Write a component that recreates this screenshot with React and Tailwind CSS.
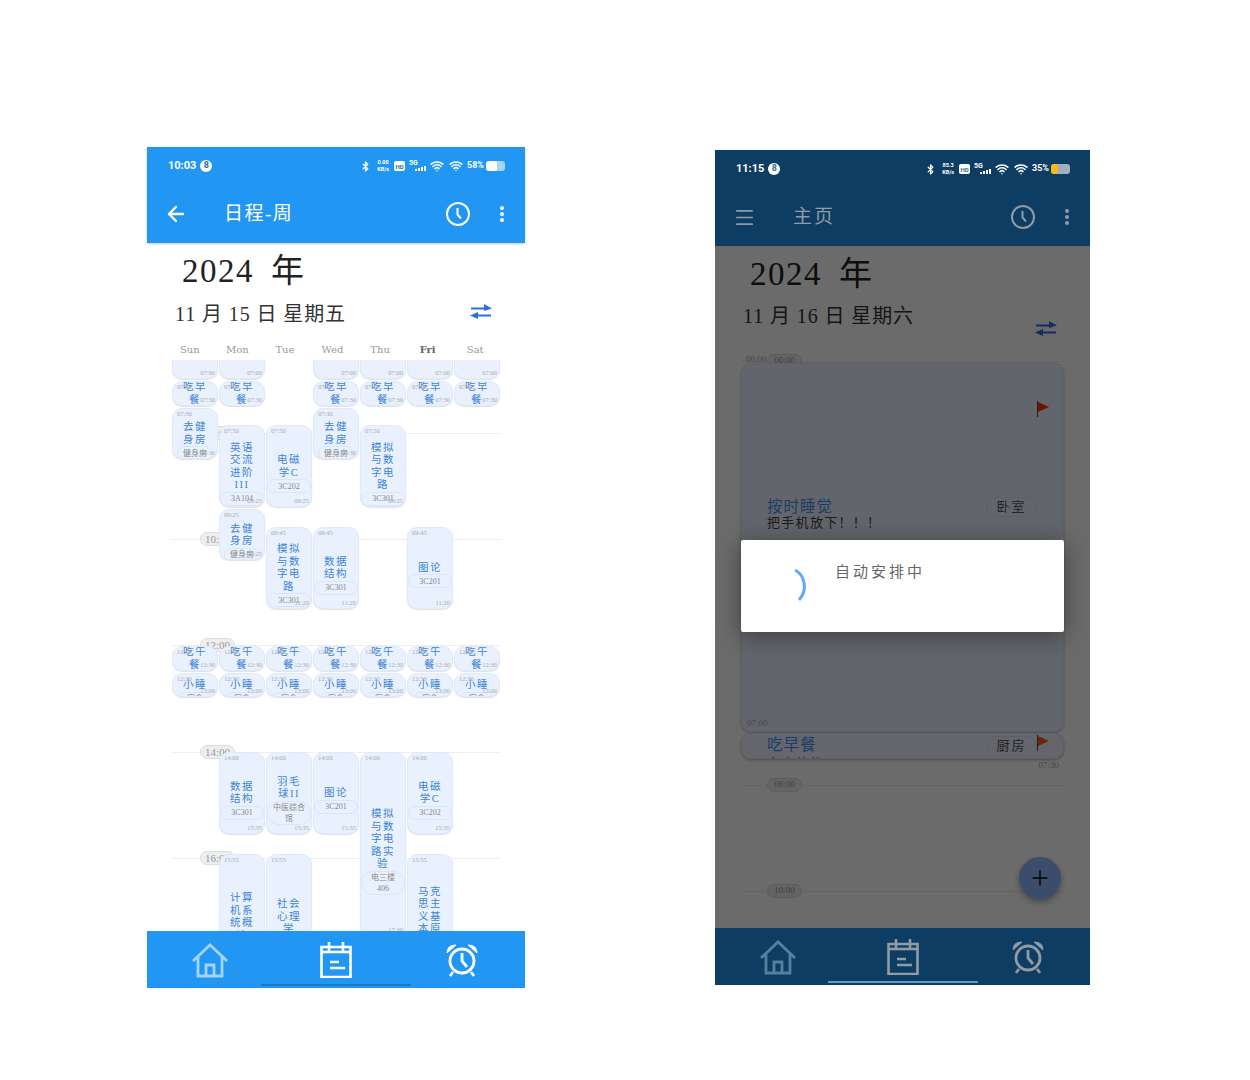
import { ArrowLeft, Bluetooth, Menu, Plus, Wifi } from "lucide-react";

const HOUR = 53;
const days = ["Sun", "Mon", "Tue", "Wed", "Thu", "Fri", "Sat"];

const toY = (t) => {
  const [h, m] = t.split(":").map(Number);
  return ((h * 60 + m) * HOUR) / 60;
};

const daily = [
  { days: [0, 1, 3, 4, 5, 6], start: "00:00", end: "07:00", title: "按时\n睡觉", room: "卧室" },
  { days: [0, 1, 3, 4, 5, 6], start: "07:00", end: "07:30", title: "吃早\n餐", room: "厨房" },
  { days: [0, 3], start: "07:30", end: "08:30", title: "去健\n身房", room: "健身房" },
  { days: [1], start: "07:50", end: "09:25", title: "英语\n交流\n进阶\nIII", room: "3A104" },
  { days: [2], start: "07:50", end: "09:25", title: "电磁\n学C", room: "3C202" },
  { days: [4], start: "07:50", end: "09:25", title: "模拟\n与数\n字电\n路", room: "3C301" },
  { days: [1], start: "09:25", end: "10:25", title: "去健\n身房", room: "健身房" },
  { days: [2], start: "09:45", end: "11:20", title: "模拟\n与数\n字电\n路", room: "3C301" },
  { days: [3], start: "09:45", end: "11:20", title: "数据\n结构", room: "3C301" },
  { days: [5], start: "09:45", end: "11:20", title: "图论", room: "3C201" },
  { days: [0, 1, 2, 3, 4, 5, 6], start: "12:00", end: "12:30", title: "吃午\n餐", room: "食堂" },
  { days: [0, 1, 2, 3, 4, 5, 6], start: "12:30", end: "13:00", title: "小睡", room: "宿舍" },
  { days: [1], start: "14:00", end: "15:35", title: "数据\n结构", room: "3C301" },
  { days: [2], start: "14:00", end: "15:35", title: "羽毛\n球II", room: "中医综合馆" },
  { days: [3], start: "14:00", end: "15:35", title: "图论", room: "3C201" },
  { days: [4], start: "14:00", end: "17:30", title: "模拟\n与数\n字电\n路实\n验", room: "电三楼\n406" },
  { days: [5], start: "14:00", end: "15:35", title: "电磁\n学C", room: "3C202" },
  { days: [1], start: "15:55", end: "18:20", title: "计算\n机系\n统概\n论", room: "3C201" },
  { days: [2], start: "15:55", end: "18:20", title: "社会\n心理\n学", room: "3C201" },
  { days: [5], start: "15:55", end: "18:20", title: "马克\n思主\n义基\n本原\n理", room: "3C201" },
];

function HomeIcon({ className }) {
  return (
    <svg className={className} width="38" height="36" viewBox="0 0 38 36" fill="none" stroke="currentColor" strokeWidth="2.8">
      <path d="M2 19 19 3l17 16" />
      <path d="M7 15v19h24V15" />
      <path d="M15 34V23h8v11" />
    </svg>
  );
}

function CalendarIcon({ className }) {
  return (
    <svg className={className} width="32" height="36" viewBox="0 0 32 36" fill="none" stroke="currentColor" strokeWidth="2.6">
      <path d="M1.5 5h29v30h-29z" />
      <path d="M1.5 10h29" />
      <path d="M9 0v9M23 0v9" />
      <path d="M10 20h9M10 26h15" />
    </svg>
  );
}

function AlarmIcon({ className }) {
  return (
    <svg className={className} width="32" height="34" viewBox="0 0 32 34" fill="none" stroke="currentColor" strokeWidth="2.8">
      <circle cx="16" cy="18" r="12" />
      <path d="M16 10v8l5 6" />
      <path d="M7 29l-3 4M25 29l3 4" />
      <path d="M1 10Q1 2 10 2z" fill="currentColor" strokeWidth="1" />
      <path d="M31 10Q31 2 22 2z" fill="currentColor" strokeWidth="1" />
    </svg>
  );
}

function ClockIcon({ className }) {
  return (
    <svg className={className} width="24" height="24" viewBox="0 0 24 24" fill="none" stroke="currentColor" strokeWidth="2">
      <circle cx="12" cy="12" r="11" />
      <path d="M11.5 6v6.5l3.5 4" />
    </svg>
  );
}

function SwapIcon({ className }) {
  return (
    <svg className={className} width="22" height="16" viewBox="0 0 22 16" fill="currentColor">
      <path d="M1 3.5h15v2H1z" />
      <path d="M14 0l8 4.5L14 7z" />
      <path d="M6 10.5h15v2H6z" />
      <path d="M8 8l-8 3.5L8 15z" />
    </svg>
  );
}

function Flag({ className }) {
  return (
    <svg className={className} width="12" height="16" viewBox="0 0 12 16">
      <path d="M.5 0v16" stroke="#4b4f55" strokeWidth="1" />
      <path d="M1 1l11 5-11 5z" fill="currentColor" />
    </svg>
  );
}

function StatusBar({ time, speed, battery, level, fill }) {
  return (
    <div className="flex h-[38px] items-center pl-[21px] pr-[20px] text-white">
      <span className="font-['Roboto',sans-serif] text-[11px] font-bold">{time}</span>
      <span className="ml-[4px] flex h-[12px] w-[12px] items-center justify-center rounded-full bg-white font-['Roboto',sans-serif] text-[9px] font-bold text-[#2b6f9f]">
        8
      </span>
      <div className="ml-auto flex items-center">
        <Bluetooth size={11} strokeWidth={2.6} />
        <div className="ml-[6px] flex flex-col items-center font-['Roboto',sans-serif] text-[5.5px] font-bold leading-[7px]">
          <span>{speed}</span>
          <span>KB/s</span>
        </div>
        <span className="ml-[5px] flex h-[10px] w-[11px] items-center justify-center rounded-[2px] bg-white font-['Roboto',sans-serif] text-[6px] font-bold text-[#2b6f9f]">
          HD
        </span>
        <div className="relative ml-[4px] h-[12px] w-[17px]">
          <span className="absolute left-0 top-[-2px] font-['Roboto',sans-serif] text-[7px] font-bold">5G</span>
          <div className="absolute bottom-[1px] right-0 flex items-end gap-[1px]">
            <i className="h-[2px] w-[2px] bg-white" />
            <i className="h-[3px] w-[2px] bg-white" />
            <i className="h-[4px] w-[2px] bg-white" />
            <i className="h-[5px] w-[2px] bg-white" />
          </div>
        </div>
        <Wifi className="ml-[4px]" size={14} strokeWidth={2.6} />
        <Wifi className="ml-[5px]" size={14} strokeWidth={2.6} />
        <span className="ml-[4px] font-['Roboto',sans-serif] text-[9px] font-bold">{battery}</span>
        <div className="ml-[2px] h-[10px] w-[19px] overflow-hidden rounded-[3px] bg-white/60">
          <div className={`h-full rounded-[2px] ${fill}`} style={{ width: level }} />
        </div>
      </div>
    </div>
  );
}

function BottomNav({ bg, home, icon, bar }) {
  return (
    <div className={`relative grid h-[57px] shrink-0 grid-cols-3 items-center justify-items-center ${bg}`}>
      <HomeIcon className={home} />
      <CalendarIcon className={icon} />
      <AlarmIcon className={icon} />
      <div className={`absolute bottom-[2px] left-1/2 h-[2px] w-[150px] -translate-x-1/2 ${bar}`} />
    </div>
  );
}

function HourLine({ hour, pillLeft, pillWidth, top, left, width, size = "text-[9px]" }) {
  return (
    <div className="absolute h-[1px] bg-[#eeeeee]" style={{ top, left, width }}>
      <span
        className={`absolute top-[-7px] flex h-[14px] items-center justify-center rounded-full border border-[#dddddd] bg-[#eeeeee] text-[#999999] ${size}`}
        style={{ left: pillLeft, width: pillWidth }}
      >
        {hour}
      </span>
    </div>
  );
}

function WeekCard({ item, day, scroll }) {
  const top = toY(item.start) - scroll;
  const height = toY(item.end) - toY(item.start);
  return (
    <div
      className="absolute flex w-[46px] flex-col items-center justify-center overflow-hidden rounded-[10px] border border-[#e0eafb] bg-[#e9f1fe] pt-[15px] shadow-[0_1px_1px_rgba(0,0,0,0.12)]"
      style={{ left: day * 47, top: top + 1, height: height - 2 }}
    >
      <span className="absolute left-[4px] top-[1px] text-[6.5px] leading-[8px] text-[#aaaaaa]">{item.start}</span>
      <span className="absolute bottom-[1px] right-[2px] text-[6.5px] leading-[8px] text-[#aaaaaa]">{item.end}</span>
      <div className="shrink-0 whitespace-pre-line text-center text-[10.5px] leading-[12.5px] tracking-[1.5px] text-[#3d84d6]">
        {item.title}
      </div>
      <div
        className={
          item.room.length > 4
            ? "flex min-h-[14px] w-full shrink-0 items-center justify-center whitespace-pre-line rounded-full border border-[#d8e5fa] px-[3px] text-center text-[8px] leading-[11px] text-[#888888]"
            : "flex min-h-[14px] min-w-[34px] shrink-0 items-center justify-center whitespace-pre-line rounded-full border border-[#d8e5fa] px-[5px] text-center text-[8px] leading-[11px] text-[#888888]"
        }
      >
        {item.room}
      </div>
    </div>
  );
}

function WeekPhone() {
  const scroll = 351;
  return (
    <div className="flex h-[841px] w-[378px] flex-col bg-white">
      <div className="h-[96px] shrink-0 bg-[#2196f3] text-white shadow-[0_1px_3px_rgba(0,0,0,0.2)]">
        <StatusBar time="10:03" speed="0.00" battery="58%" level="60%" fill="bg-white" />
        <div className="flex h-[58px] items-center pl-[17px] pr-[21px]">
          <ArrowLeft size={24} strokeWidth={2.4} />
          <span className="ml-[36px] text-[19px] tracking-[1.5px]">日程-周</span>
          <ClockIcon className="ml-auto" />
          <div className="ml-[30px] flex flex-col gap-[2px]">
            <i className="h-[4px] w-[4px] rounded-full bg-white" />
            <i className="h-[4px] w-[4px] rounded-full bg-white" />
            <i className="h-[4px] w-[4px] rounded-full bg-white" />
          </div>
        </div>
      </div>

      <div className="flex h-[53px] shrink-0 items-center pl-[35px] pt-[5px] text-[33px] tracking-[1.5px] text-[#222222]">
        2024<span className="ml-[17px]">年</span>
      </div>
      <div className="flex h-[36px] shrink-0 items-center pl-[28px] pr-[33px] text-[20px] text-[#333333]">
        <span className="tracking-[0.9px]">11 月 15 日 星期五</span>
        <SwapIcon className="ml-auto mb-[5px] text-[#2f6de0]" />
      </div>
      <div className="grid h-[28px] shrink-0 grid-cols-7 items-end pb-[3px] pl-[19px] pr-[26px] font-['DejaVu_Serif',serif] text-[10px] text-[#999999]">
        {days.map((d) => (
          <span key={d} className={d === "Fri" ? "text-center font-bold text-[#666666]" : "text-center"}>
            {d}
          </span>
        ))}
      </div>

      <div className="relative min-h-0 flex-1 overflow-hidden">
        <HourLine hour="08:00" top={73} left={25} width={328} pillLeft={28} pillWidth={35} size="text-[11px]" />
        <HourLine hour="10:00" top={179} left={25} width={328} pillLeft={28} pillWidth={35} size="text-[11px]" />
        <HourLine hour="12:00" top={285} left={25} width={328} pillLeft={28} pillWidth={35} size="text-[11px]" />
        <HourLine hour="14:00" top={392} left={25} width={328} pillLeft={28} pillWidth={35} size="text-[11px]" />
        <HourLine hour="16:00" top={498} left={25} width={328} pillLeft={28} pillWidth={35} size="text-[11px]" />
        <div className="absolute left-[25px] top-0">
          {daily.map((item) =>
            item.days.map((day) => <WeekCard key={item.start + day} item={item} day={day} scroll={scroll} />)
          )}
        </div>
      </div>

      <BottomNav bg="bg-[#2196f3]" home="text-[#a5d4fb]" icon="text-white" bar="bg-[#1c78c4]" />
    </div>
  );
}

function HomePhone() {
  return (
    <div className="flex h-[835px] w-[375px] flex-col bg-white">
      <div className="h-[96px] shrink-0 bg-[#0d3d63] text-[#8f9ca6]">
        <StatusBar time="11:15" speed="85.3" battery="35%" level="35%" fill="bg-[#fdb913]" />
        <div className="flex h-[58px] items-center pl-[18px] pr-[21px]">
          <Menu size={23} strokeWidth={1.8} />
          <span className="ml-[37px] text-[19px] tracking-[2px]">主页</span>
          <ClockIcon className="ml-auto" />
          <div className="ml-[30px] flex flex-col gap-[2px]">
            <i className="h-[4px] w-[4px] rounded-full bg-[#8f9ca6]" />
            <i className="h-[4px] w-[4px] rounded-full bg-[#8f9ca6]" />
            <i className="h-[4px] w-[4px] rounded-full bg-[#8f9ca6]" />
          </div>
        </div>
      </div>

      <div className="relative flex min-h-0 flex-1 flex-col overflow-hidden">
        <div className="flex h-[53px] shrink-0 items-center pl-[35px] pt-[5px] text-[33px] tracking-[1.5px] text-[#222222]">
          2024<span className="ml-[17px]">年</span>
        </div>
        <div className="h-[36px] shrink-0 pl-[28px] text-[20px] leading-[34px] text-[#333333]">
          <span className="tracking-[0.9px]">11 月 16 日 星期六</span>
        </div>
        <div className="flex h-[20px] shrink-0 justify-end pr-[33px]">
          <SwapIcon className="mt-[-14px] text-[#2f6de0]" />
        </div>

        <div className="relative min-h-0 flex-1">
          <HourLine hour="00:00" top={6} left={26} width={323} pillLeft={26} pillWidth={35} />
          <span className="absolute left-[31px] top-[-2px] text-[9px] text-[#aaaaaa]">00:00</span>
          <HourLine hour="08:00" top={430} left={26} width={323} pillLeft={26} pillWidth={35} />
          <HourLine hour="10:00" top={536} left={26} width={323} pillLeft={26} pillWidth={35} />

          <div className="absolute left-[26px] top-[8px] flex h-[369px] w-[323px] flex-col justify-center rounded-[10px] border border-[#dfe6f5] bg-[#e9f1fe] pb-[65px] pl-[25px] pr-[26px] shadow-[0_1px_3px_rgba(0,0,0,0.25)]">
            <Flag className="absolute right-[14px] top-[37px] text-[#ff3300]" />
            <div className="flex items-center justify-between">
              <div>
                <div className="text-[15.5px] leading-[16px] tracking-[1px] text-[#4a90f0]">按时睡觉</div>
                <div className="text-[13px] leading-[16px] tracking-[1.3px] text-[#444444]">把手机放下！！！</div>
              </div>
              <span className="mb-[16px] flex h-[20px] w-[51px] items-center justify-center rounded-full border border-[#d8e5fa] text-[13px] tracking-[2px] text-[#555555]">
                卧室
              </span>
            </div>
            <span className="absolute bottom-[1px] left-[5px] text-[9px] text-[#aaaaaa]">07:00</span>
          </div>

          <div className="absolute left-[26px] top-[378px] flex h-[26px] w-[323px] items-start justify-between overflow-hidden rounded-[10px] border border-[#dfe6f5] bg-[#eef4ff] pl-[25px] pr-[26px] shadow-[0_1px_3px_rgba(0,0,0,0.3)]">
            <div className="shrink-0">
              <div className="text-[15.5px] leading-[22px] tracking-[1px] text-[#3f8cff]">吃早餐</div>
              <div className="text-[13px] leading-[16px] tracking-[1px] text-[#333333]">多吃蔬菜</div>
            </div>
            <span className="mt-[2px] flex h-[20px] w-[51px] items-center justify-center rounded-full border border-[#d8e5fa] text-[13px] tracking-[2px] text-[#555555]">
              厨房
            </span>
            <Flag className="absolute right-[14px] top-[1px] text-[#ff5a1f]" />
          </div>
          <span className="absolute right-[31px] top-[404px] text-[9px] text-[#aaaaaa]">07:30</span>
        </div>

        <div className="absolute bottom-[29px] right-[29px] z-0 flex h-[42px] w-[42px] items-center justify-center rounded-full bg-[#8fb7ff] text-black shadow-[0_3px_6px_rgba(0,0,0,0.35)]">
          <Plus size={24} strokeWidth={1.4} />
        </div>

        <div className="absolute inset-0 z-10 bg-black/58" />

        <div className="absolute left-[26px] right-[26px] top-[294px] z-20 flex h-[92px] rounded-[2px] bg-white pl-[52px] shadow-[0_4px_24px_rgba(0,0,0,0.4)]">
          <svg className="mt-[28px]" width="16" height="34" viewBox="0 0 16 34" fill="none" stroke="#63a9f7" strokeWidth="3">
            <path d="M2 2C12 7 15 22 6 32" />
          </svg>
          <span className="ml-[26px] mt-[21px] text-[15px] leading-[22px] tracking-[3px] text-[#666666]">自动安排中</span>
        </div>
      </div>

      <BottomNav bg="bg-[#0d3d63]" home="text-[#55809f]" icon="text-[#909ba3]" bar="bg-[#6a95bd]" />
    </div>
  );
}

export default function App() {
  return (
    <div className="flex h-[1080px] w-[1250px] items-start bg-white pl-[147px] font-['Liberation_Serif','Noto_Sans_CJK_SC',serif]">
      <div className="mt-[147px]">
        <WeekPhone />
      </div>
      <div className="ml-[190px] mt-[150px]">
        <HomePhone />
      </div>
    </div>
  );
}
